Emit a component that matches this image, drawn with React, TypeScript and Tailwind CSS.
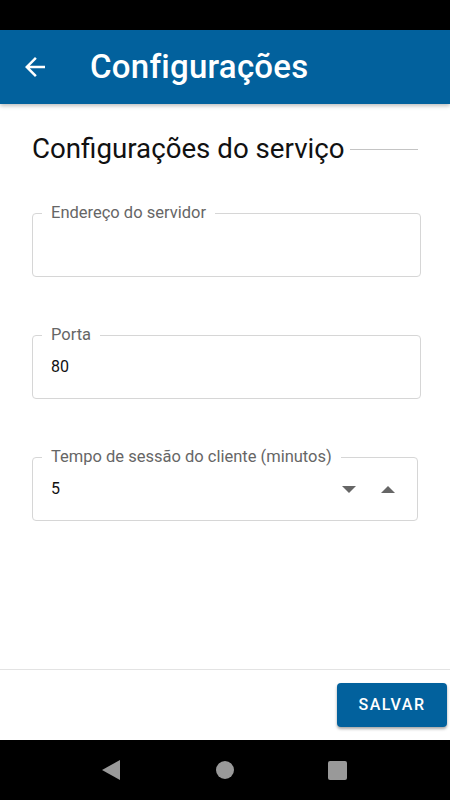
import React from 'react';

function OutlinedField({ label, value, className = '', children }: { label: string; value?: string; className?: string; children?: React.ReactNode }) {
  return (
    <div className={`relative h-[64px] rounded-[4px] border border-[#d6d6d6] ${className}`}>
      <span className="absolute -top-[11px] left-[9px] bg-white px-[9px] text-[16.5px] leading-[20px] text-[#666666]">
        {label}
      </span>
      <div className="flex h-full items-center pl-[18px] pr-[22px] text-[16px] text-[#111111]">
        <span className="flex-1">{value}</span>
        {children}
      </div>
    </div>
  );
}

export default function App() {
  return (
    <div className="flex h-[800px] w-[450px] flex-col bg-white font-['Roboto',sans-serif]">
      <div className="h-[30px] bg-black" />
      <header className="relative z-10 flex h-[74px] items-center bg-[#02619d] shadow-[0_2px_4px_rgba(0,0,0,0.25)]">
        <svg className="ml-[20px]" width="30" height="30" viewBox="0 0 24 24" fill="white">
          <path d="M20 11H7.83l5.59-5.59L12 4l-8 8 8 8 1.41-1.41L7.83 13H20v-2z" />
        </svg>
        <h1 className="ml-[40px] text-[33px] font-medium leading-[40px] tracking-[0.25px] text-white">Configurações</h1>
      </header>

      <main className="flex flex-1 flex-col px-[32px] pt-[28px]">
        <div className="flex h-[33px] items-center">
          <h2 className="text-[27.7px] leading-[33px] text-[#111111]">Configurações do serviço</h2>
          <div className="ml-[5px] mt-[2px] h-[1.5px] flex-1 bg-[#c4c4c4]" />
        </div>

        <div className="mr-[-3px] mt-[48px] flex flex-col gap-[58px]">
          <OutlinedField label="Endereço do servidor" />
          <OutlinedField label="Porta" value="80" />
          <OutlinedField label="Tempo de sessão do cliente (minutos)" value="5" className="mr-[3px]">
            <svg width="14" height="7" viewBox="0 0 14 7" fill="#666666">
              <path d="M0 0h14L7 7z" />
            </svg>
            <svg className="ml-[25px]" width="14" height="7" viewBox="0 0 14 7" fill="#666666">
              <path d="M0 7h14L7 0z" />
            </svg>
          </OutlinedField>
        </div>
      </main>

      <footer className="flex h-[71px] items-start justify-end border-t border-[#e3e3e3] pr-[3px] pt-[13px]">
        <button className="h-[44px] w-[110px] rounded-[4px] bg-[#02619d] text-[16px] font-medium tracking-[1.5px] text-white shadow-[0_2px_3px_rgba(0,0,0,0.35)]">
          SALVAR
        </button>
      </footer>

      <nav className="flex h-[60px] items-center bg-black">
        <svg className="ml-[102px]" width="18" height="20" viewBox="0 0 18 20" fill="#999999">
          <path d="M18 0v20L0 10z" />
        </svg>
        <div className="ml-[96px] h-[18px] w-[18px] rounded-full bg-[#999999]" />
        <div className="ml-[94px] h-[19px] w-[19px] rounded-[2px] bg-[#999999]" />
      </nav>
    </div>
  );
}
